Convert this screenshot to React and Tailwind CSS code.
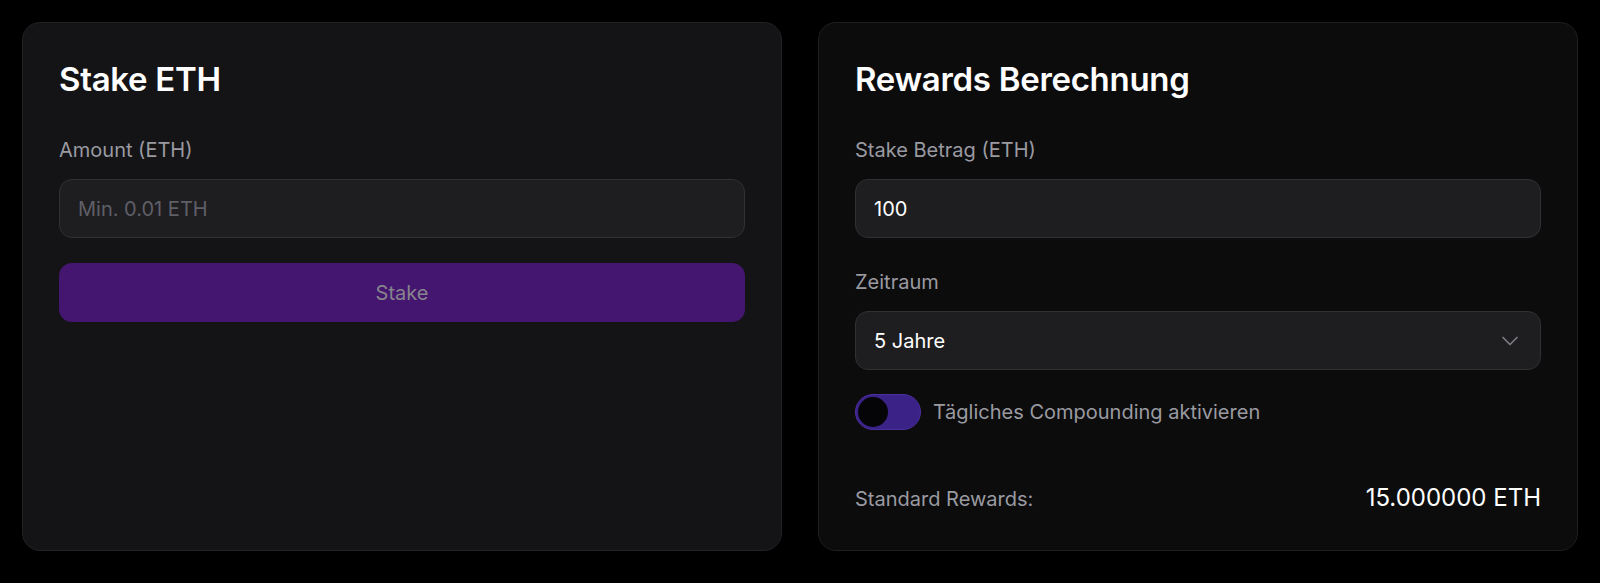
import React, { useState } from 'react';
import { ChevronDown } from 'lucide-react';

export default function App() {
  const [amount, setAmount] = useState('');
  const [stake, setStake] = useState('100');
  const [period, setPeriod] = useState('5');
  const [compound, setCompound] = useState(false);

  const rewards = (parseFloat(stake || '0') * 0.03 * parseInt(period, 10)).toFixed(6);

  return (
    <div className="min-h-screen bg-black p-[22px] font-['Inter',sans-serif]">
      <div className="grid grid-cols-2 gap-[36px]">
        {/* Stake card */}
        <div className="bg-[#141416] border border-[#222225] rounded-[18px] p-[36px] min-h-[529px]">
          <h2 className="text-[33px] leading-[40px] font-semibold text-white tracking-[-0.3px]">Stake ETH</h2>
          <div className="mt-[36px]">
            <label className="block text-[20px] leading-[30px] text-[#9a9aa1] mb-[14px]">Amount (ETH)</label>
            <input
              value={amount}
              onChange={(e) => setAmount(e.target.value)}
              placeholder="Min. 0.01 ETH"
              className="w-full h-[59px] bg-[#1e1e21] border border-[#303035] rounded-[13px] px-[18px] text-[20px] text-white placeholder:text-[#5f5f67] outline-none"
            />
          </div>
          <button
            disabled={!amount}
            className="mt-[25px] w-full h-[59px] bg-[#45166f] rounded-[13px] text-[20px] text-[#86848d]"
          >
            Stake
          </button>
        </div>

        {/* Rewards card */}
        <div className="bg-[#0c0c0d] border border-[#1f1f22] rounded-[18px] p-[36px] min-h-[529px] flex flex-col">
          <h2 className="text-[33px] leading-[40px] font-semibold text-white tracking-[-0.3px]">Rewards Berechnung</h2>
          <div className="mt-[36px]">
            <label className="block text-[20px] leading-[30px] text-[#9a9aa1] mb-[14px]">Stake Betrag (ETH)</label>
            <input
              value={stake}
              onChange={(e) => setStake(e.target.value)}
              className="w-full h-[59px] bg-[#1e1e21] border border-[#303035] rounded-[13px] px-[18px] text-[20px] text-white outline-none"
            />
          </div>
          <div className="mt-[29px]">
            <label className="block text-[20px] leading-[30px] text-[#9a9aa1] mb-[14px]">Zeitraum</label>
            <div className="relative">
              <select
                value={period}
                onChange={(e) => setPeriod(e.target.value)}
                className="w-full h-[59px] appearance-none bg-[#1e1e21] border border-[#303035] rounded-[13px] px-[18px] text-[20px] text-white outline-none"
              >
                <option value="1">1 Jahr</option>
                <option value="2">2 Jahre</option>
                <option value="5">5 Jahre</option>
              </select>
              <ChevronDown
                size={28}
                strokeWidth={1.5}
                className="absolute right-[17px] top-1/2 -translate-y-1/2 text-[#7b7b82] pointer-events-none"
              />
            </div>
          </div>
          <div className="mt-[24px] flex items-center gap-[12px]">
            <button
              onClick={() => setCompound(!compound)}
              className={`w-[66px] h-[36px] rounded-full bg-[#3b2287] border border-[#4a2fa0] p-[2px] flex ${compound ? 'justify-end' : 'justify-start'}`}
            >
              <span className="block w-[30px] h-[30px] rounded-full bg-[#050508]" />
            </button>
            <span className="text-[20px] text-[#9a9aa1]">Tägliches Compounding aktivieren</span>
          </div>
          <div className="mt-auto flex items-baseline justify-between">
            <span className="text-[20px] text-[#9a9aa1]">Standard Rewards:</span>
            <span className="text-[24px] leading-[32px] text-white">{rewards} ETH</span>
          </div>
        </div>
      </div>
    </div>
  );
}
